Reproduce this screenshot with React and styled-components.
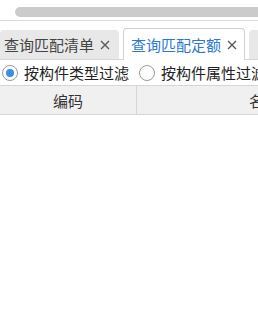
import React from 'react';
import styled, { createGlobalStyle } from 'styled-components';

const GlobalStyle = createGlobalStyle`
  html, body {
    margin: 0;
    padding: 0;
    background: #fff;
    overflow: hidden;
  }
  body {
    font-family: "Noto Sans CJK SC", "Noto Sans", sans-serif;
    color: #333;
  }
`;

const Page = styled.div`
  width: 258px;
  height: 325px;
  overflow: hidden;
`;

const ScrollArea = styled.div`
  height: 21px;
  border-bottom: 1px solid #dcdcdc;
  padding: 7px 0 0 15px;
  box-sizing: border-box;
`;

const ScrollThumb = styled.div`
  width: 300px;
  height: 10px;
  border-radius: 5px;
  background: #cbcbcb;
`;

const TabStrip = styled.div`
  display: flex;
  align-items: flex-end;
  gap: 4px;
  height: 38px;
  border-bottom: 1px solid #d6d6d6;
  white-space: nowrap;
`;

const Tab = styled.div`
  flex: none;
  display: flex;
  align-items: center;
  box-sizing: border-box;
  width: ${p => p.$width}px;
  height: ${p => (p.$active ? 32 : 29)}px;
  margin-bottom: ${p => (p.$active ? -1 : 0)}px;
  padding-left: ${p => (p.$active ? 7 : 4)}px;
  font-size: 15px;
  border-radius: 4px 4px 0 0;
  background: ${p => (p.$active ? '#fff' : '#e8e8e8')};
  border: ${p => (p.$active ? '1px solid #d0d0d0' : 'none')};
  border-bottom: none;
  color: ${p => (p.$active ? '#2a78d2' : '#444')};
`;

const CloseIcon = styled.svg`
  flex: none;
  margin-left: 6px;
  width: 10px;
  height: 10px;
`;

const Close = () => (
  <CloseIcon viewBox="0 0 10 10">
    <path d="M1 1L9 9M9 1L1 9" stroke="#5a5a5a" strokeWidth="1.4" />
  </CloseIcon>
);

const FilterRow = styled.div`
  display: flex;
  align-items: center;
  height: 25px;
  padding-left: 2px;
  font-size: 15px;
  white-space: nowrap;
`;

const Option = styled.label`
  display: flex;
  align-items: center;
  gap: 6px;
  margin-right: 10px;
  color: #222;
`;

const Radio = styled.span`
  flex: none;
  width: 16px;
  height: 16px;
  box-sizing: border-box;
  border-radius: 50%;
  border: 1px solid #9a9a9a;
  background: #fff;
  display: flex;
  align-items: center;
  justify-content: center;
  &::after {
    content: '';
    width: 8px;
    height: 8px;
    border-radius: 50%;
    background: ${p => (p.$checked ? '#3a8ee8' : 'transparent')};
  }
`;

const HeaderRow = styled.div`
  display: flex;
  height: 28px;
  border-top: 1px solid #d6d6d6;
  border-bottom: 1px solid #d6d6d6;
  background: #f0f0f0;
  font-size: 15px;
  white-space: nowrap;
`;

const HeaderCell = styled.div`
  flex: none;
  width: ${p => p.$width}px;
  display: flex;
  align-items: center;
  justify-content: center;
  border-right: 1px solid #d6d6d6;
  color: #333;
`;

const App = () => (
  <Page>
    <GlobalStyle />
    <ScrollArea>
      <ScrollThumb />
    </ScrollArea>
    <TabStrip>
      <Tab $width={119}>
        查询匹配清单<Close />
      </Tab>
      <Tab $width={122} $active>
        查询匹配定额<Close />
      </Tab>
      <Tab $width={60} />
    </TabStrip>
    <FilterRow>
      <Option>
        <Radio $checked />
        按构件类型过滤
      </Option>
      <Option>
        <Radio />
        按构件属性过滤
      </Option>
    </FilterRow>
    <HeaderRow>
      <HeaderCell $width={136}>编码</HeaderCell>
      <HeaderCell $width={254}>名称</HeaderCell>
    </HeaderRow>
  </Page>
);

export default App;
